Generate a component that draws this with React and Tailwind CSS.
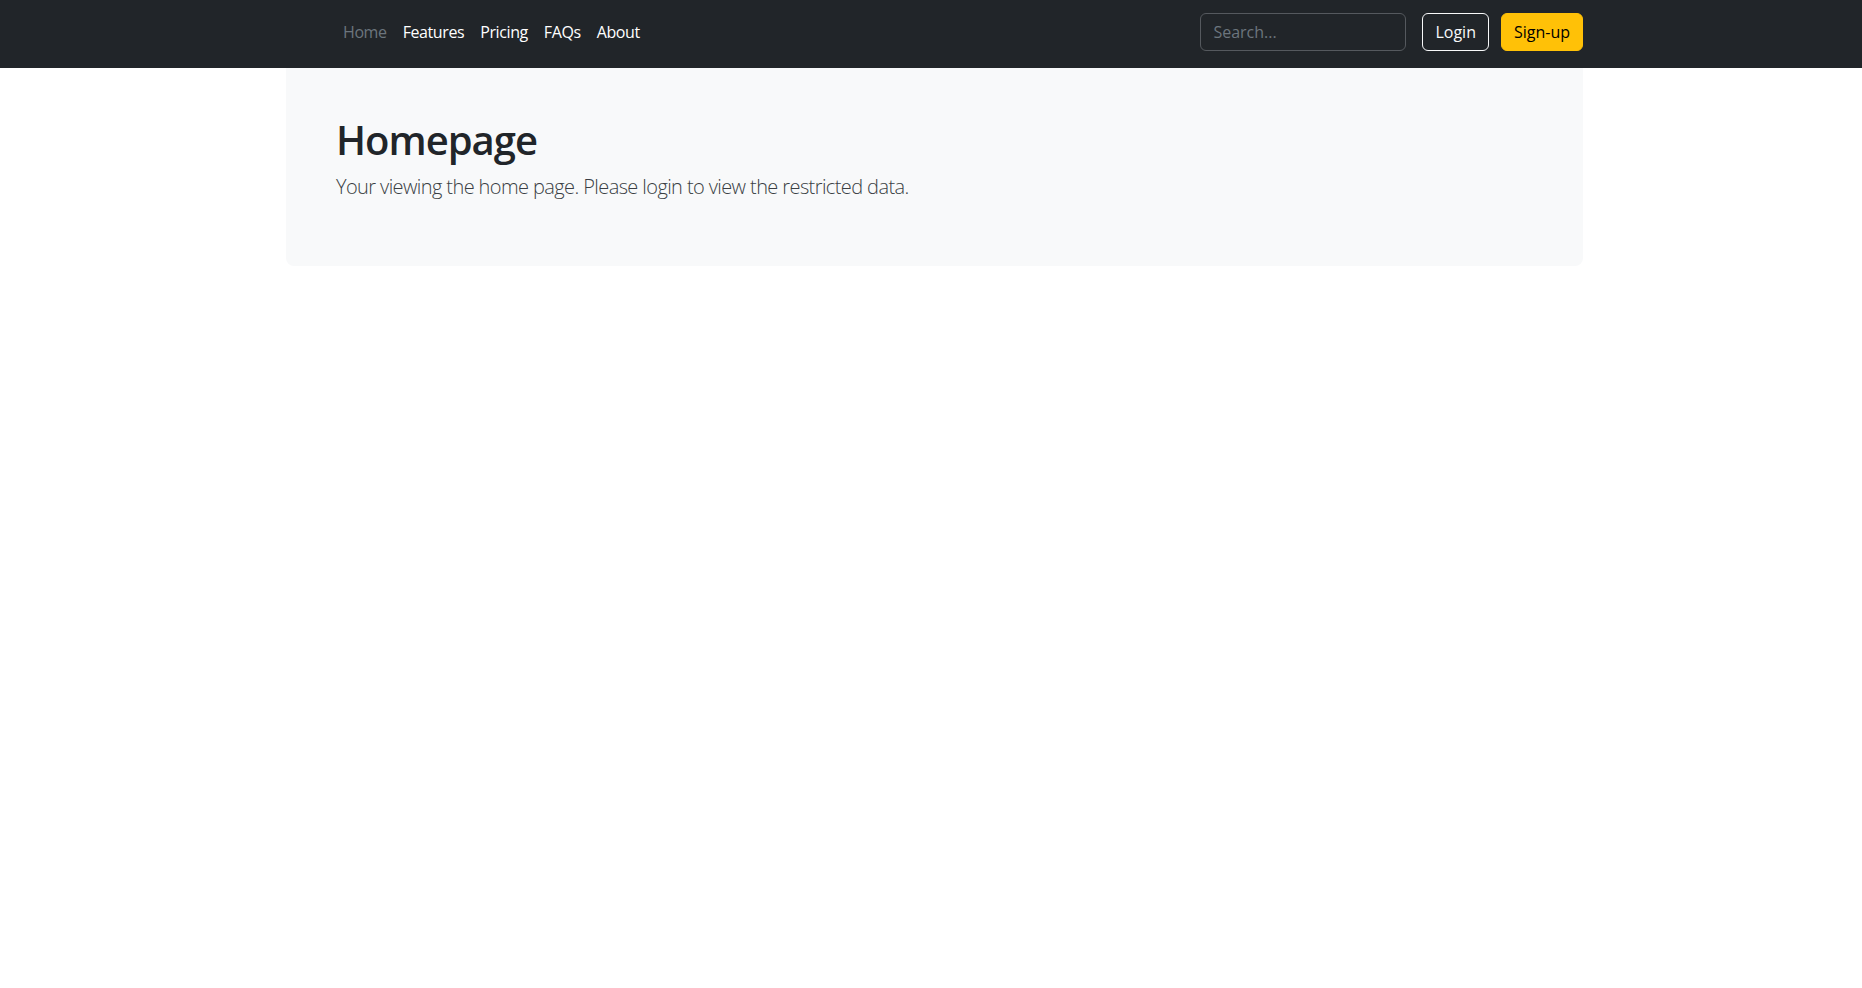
import React from "react";

const links = ["Home", "Features", "Pricing", "FAQs", "About"];

const App = () => {
  return (
    <div className="min-h-screen bg-white font-['Open_Sans',sans-serif] text-[#212529]">
      {/* Top navbar */}
      <header className="h-[68px] bg-[#212529]">
        <div className="ml-[286px] w-[1297px] h-full pb-[4px] flex items-center">
          <ul className="flex items-center ml-[49px] tracking-[-0.4px]">
            {links.map((link, index) => (
              <li key={link}>
                <a
                  href="#"
                  className={`px-2 text-[16px] ${index === 0 ? "text-[#6c757d]" : "text-white"}`}
                >
                  {link}
                </a>
              </li>
            ))}
          </ul>

          <div className="ml-auto flex items-center">
            <input
              type="search"
              placeholder="Search..."
              className="w-[206px] h-[38px] mr-4 px-3 rounded-md border border-[#55595e] bg-[#212529] text-[16px] text-white placeholder:text-[#6c757d] outline-none"
            />
            <button className="h-[38px] px-3 mr-3 rounded-md border border-[#f8f9fa] text-[16px] text-[#f8f9fa]">
              Login
            </button>
            <button className="h-[38px] px-3 rounded-md border border-[#ffc107] bg-[#ffc107] text-[16px] text-black">
              Sign-up
            </button>
          </div>
        </div>
      </header>

      {/* Hero box */}
      <main className="ml-[286px] w-[1297px]">
        <div className="py-12 pl-[50px] pr-12 bg-[#f8f9fa] rounded-b-lg">
          <h1 className="text-[40px] leading-[1.2] font-semibold tracking-[-1px] mb-2">Homepage</h1>
          <p className="text-[20px] leading-[1.5] font-light tracking-[-0.6px] text-[#3a3f44] mb-4">
            Your viewing the home page. Please login to view the restricted data.
          </p>
        </div>
      </main>
    </div>
  );
};

export default App;
